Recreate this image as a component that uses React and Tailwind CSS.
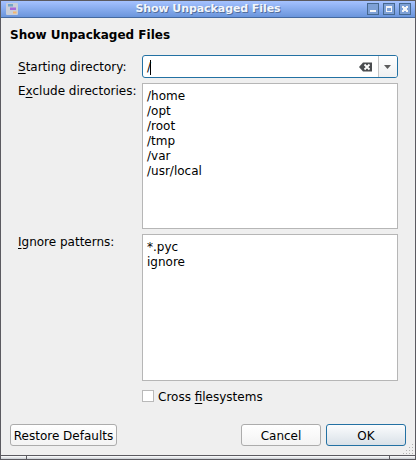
const PATTERNS = ["*.pyc", "ignore"];
const DIRECTORIES = ["/home", "/opt", "/root", "/tmp", "/var", "/usr/local"];

function WindowButton({ children }) {
  return (
    <span className="flex h-3 w-3 items-center justify-center border border-[#46688f] bg-[#7da0d6]">
      <svg width="10" height="10" viewBox="0 0 10 10" shapeRendering="crispEdges" className="shrink-0">
        {children}
      </svg>
    </span>
  );
}

function TitleBar() {
  return (
    <div className="relative flex h-[17px] shrink-0 items-center justify-between border-b border-[#44699f] bg-linear-to-b from-[#a5c2ff] to-[#6a95dc] pr-1 pl-[5px]">
      <svg width="12" height="12" viewBox="0 0 12 12" className="shrink-0">
        <rect width="12" height="12" rx="1" fill="#c9ced8" />
        <rect x="2" y="1" width="5" height="2.5" fill="#73a6c8" />
        <rect x="4" y="4.5" width="6" height="2.5" fill="#a868da" />
        <rect x="7" y="8.5" width="3.5" height="2" fill="#f5b56d" />
      </svg>
      <span className="absolute inset-x-0 top-0 text-center text-[11px] leading-4 font-bold tracking-[-0.08px] text-[#f3f6fb] [text-shadow:1px_1px_0_#536f9c]">
        Show Unpackaged Files
      </span>
      <div className="flex gap-1">
        <WindowButton>
          <rect x="2" y="6" width="6" height="2" fill="#f4f5f7" />
        </WindowButton>
        <WindowButton>
          <path d="M2 2h6v6h-6zM3 4v3h4v-3z" fillRule="evenodd" fill="#f4f5f7" />
        </WindowButton>
        <WindowButton>
          <path d="M2 2h2v1h2v-1h2v2h-1v2h1v2h-2v-1h-2v1h-2v-2h1v-2h-1z" fill="#f4f5f7" />
        </WindowButton>
      </div>
    </div>
  );
}

function Mnemonic({ children }) {
  return <span className="underline decoration-1 underline-offset-2">{children}</span>;
}

function ListBox({ items }) {
  return (
    <div className="w-64 border border-[#b6b6b6] bg-white px-1 pt-[5px]">
      {items.map((item) => (
        <div key={item}>{item}</div>
      ))}
    </div>
  );
}

function Button({ className, children }) {
  return (
    <button className={`h-[22px] rounded-[3px] border bg-linear-to-b pt-0.5 text-center whitespace-nowrap ${className}`}>
      {children}
    </button>
  );
}

export default function App() {
  return (
    <div className="flex h-[460px] w-[416px] flex-col overflow-hidden bg-[#efefef] font-['DejaVu_Sans',sans-serif] text-[12px] leading-[15px] text-black">
      <div className="flex h-[455px] flex-col border-x border-t border-[#5b5a60]">
        <TitleBar />
        <div className="flex flex-1 flex-col pr-[17px] pl-[9px]">
          <h1 className="mt-2.5 h-[15px] font-bold">Show Unpackaged Files</h1>
          <div className="mt-3 grid grid-cols-[124px_256px] grid-rows-[23px_146px_147px] gap-y-[5px] pl-2">
            <label className="pt-[5px] whitespace-nowrap">
              <Mnemonic>S</Mnemonic>tarting directory:
            </label>
            <div className="flex overflow-hidden rounded-[3px] border border-[#2371a3] bg-white">
              <div className="flex flex-1 items-center pt-px pl-1">
                /<span className="-ml-px h-[15px] w-px bg-black" />
              </div>
              <div className="flex w-5 items-center">
                <svg width="14" height="10" viewBox="0 0 14 10" className="ml-px">
                  <path d="M4 0.5H13V9.5H4L0 5z" fill="#4a4c4f" />
                  <path d="M5.5 2.5l5 5m0-5l-5 5" stroke="#fff" strokeWidth="1.8" />
                </svg>
              </div>
              <div className="flex w-[19px] items-center justify-center border-l border-[#c4c4c4] bg-linear-to-b from-white to-[#eff0f1]">
                <svg width="7" height="4" viewBox="0 0 7 4" className="-ml-px">
                  <path d="M0 0h7L3.5 4z" fill="#5c5c5c" />
                </svg>
              </div>
            </div>
            <label className="pt-px whitespace-nowrap">
              E<Mnemonic>x</Mnemonic>clude directories:
            </label>
            <ListBox items={DIRECTORIES} />
            <label className="pt-px whitespace-nowrap">
              <Mnemonic>I</Mnemonic>gnore patterns:
            </label>
            <ListBox items={PATTERNS} />
          </div>
          <label className="mt-[9px] ml-[132px] flex h-[14px] items-start gap-1">
            <span className="h-3 w-3 border border-[#b9b9b9] bg-white" />
            <span>
              Cross <Mnemonic>f</Mnemonic>ilesystems
            </span>
          </label>
          <div className="mt-5 -mr-2 flex">
            <Button className="w-[107px] border-[#acacac] from-white to-[#f3f3f3]">Restore Defaults</Button>
            <Button className="ml-auto w-20 border-[#acacac] from-white to-[#f3f3f3]">Cancel</Button>
            <Button className="ml-[5px] w-20 border-[#2371a3] from-[#fbfcfd] to-[#d9e1e8]">OK</Button>
          </div>
        </div>
      </div>
      <svg width="11" height="11" viewBox="0 0 11 11" className="-mt-[11px] ml-[403px] shrink-0" fill="#b4b4b4" shapeRendering="crispEdges">
        <path d="M9 0h1v1h-1zM6 3h1v1h-1zM9 3h1v1h-1zM3 6h1v1h-1zM6 6h1v1h-1zM9 6h1v1h-1zM0 9h1v1h-1zM3 9h1v1h-1zM6 9h1v1h-1zM9 9h1v1h-1z" />
      </svg>
      <div className="flex h-[5px] shrink-0 border border-[#5b5a60] bg-linear-to-b from-white to-[#c8ccd1]">
        <div className="w-[26px] border-r border-[#5b5a60]" />
        <div className="flex-1" />
        <div className="w-[26px] border-l border-[#5b5a60]" />
      </div>
    </div>
  );
}
